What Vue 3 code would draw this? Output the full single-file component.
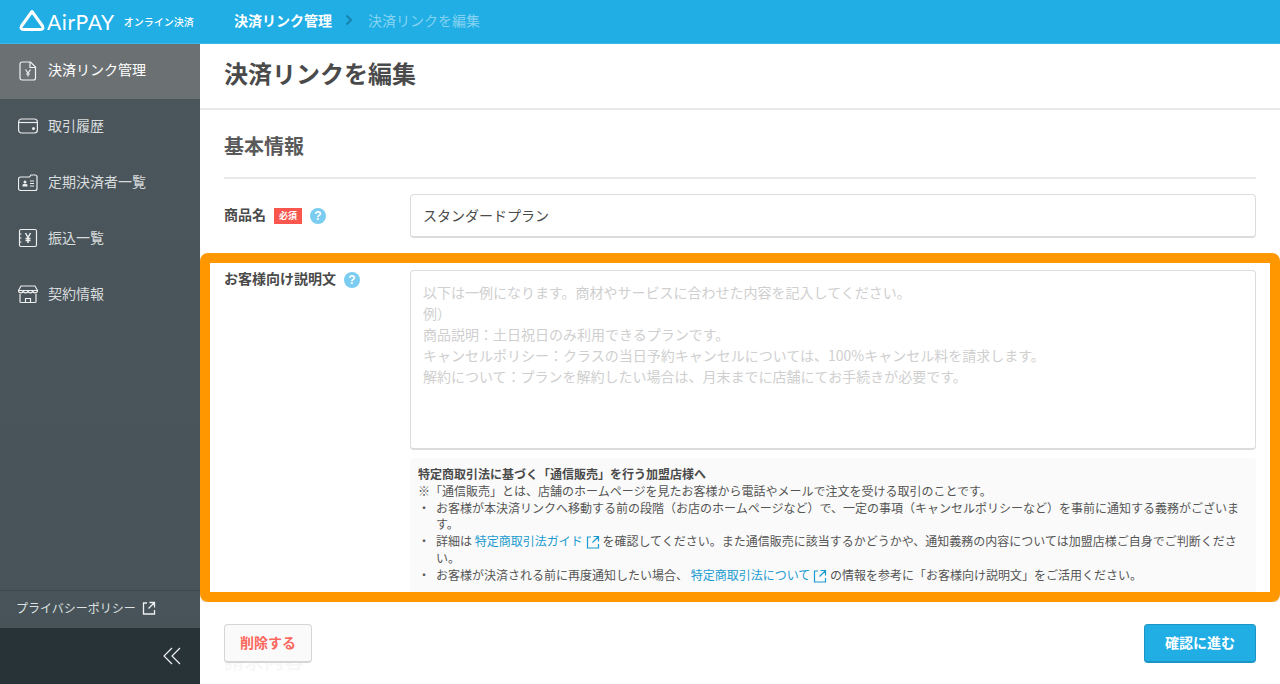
<script setup>
const navItems = [
  { label: '決済リンク管理', icon: 'doc', active: true },
  { label: '取引履歴', icon: 'wallet' },
  { label: '定期決済者一覧', icon: 'card' },
  { label: '振込一覧', icon: 'yen' },
  { label: '契約情報', icon: 'shop' }
]
const placeholder = `以下は一例になります。商材やサービスに合わせた内容を記入してください。
例）
商品説明：土日祝日のみ利用できるプランです。
キャンセルポリシー：クラスの当日予約キャンセルについては、100%キャンセル料を請求します。
解約について：プランを解約したい場合は、月末までに店舗にてお手続きが必要です。`
</script>

<template>
  <div class="page">
    <header class="topbar">
      <div class="brand">
        <svg class="logo-mark" viewBox="0 0 26 23" width="26" height="23" aria-hidden="true">
          <path d="M13 2.500 L23.500 17 Q25 20.500 21.500 20.500 L4.500 20.500 Q1 20.500 2.500 17 Z" fill="none" stroke="#fff" stroke-width="3" stroke-linejoin="round" />
        </svg>
        <span class="logo-text">AirPAY</span>
        <span class="logo-sub">オンライン決済</span>
      </div>
      <nav class="crumbs">
        <span class="crumb-main">決済リンク管理</span>
        <svg viewBox="0 0 8 12" width="8" height="12" aria-hidden="true"><path d="M1.500 1.500 L6 6 L1.500 10.500" fill="none" stroke="#1683ad" stroke-width="2" /></svg>
        <span class="crumb-sub">決済リンクを編集</span>
      </nav>
    </header>

    <div class="body">
      <aside class="sidebar">
        <ul class="nav">
          <li v-for="item in navItems" :key="item.label" class="nav-item" :class="{ active: item.active }">
            <svg class="nav-icon" viewBox="0 0 20 20" width="20" height="20" fill="none" stroke="#fff" stroke-width="1.200" aria-hidden="true">
              <template v-if="item.icon === 'doc'">
                <path d="M4 1h8.500l5 5v11a2 2 0 0 1-2 2H4a2 2 0 0 1-2-2V3a2 2 0 0 1 2-2z" />
                <path d="M12 1v5.500h5.500" />
                <path d="M7.500 8.500l2.500 3.500 2.500-3.500M10 12v3.500M8 13h4" />
              </template>
              <template v-else-if="item.icon === 'wallet'">
                <rect x="0.600" y="3" width="18.800" height="14" rx="3" />
                <path d="M1 6.500h18" />
                <circle cx="15.500" cy="12.500" r="1.500" fill="#fff" stroke="none" />
              </template>
              <template v-else-if="item.icon === 'card'">
                <path d="M2.500 5h9l1.500-2h4a2 2 0 0 1 2 2v11.500a2 2 0 0 1-2 2H2.500a2 2 0 0 1-2-2V7a2 2 0 0 1 2-2z" />
                <circle cx="7" cy="10" r="1.500" fill="#fff" stroke="none" />
                <path d="M4.500 14.500h5V13a1.500 1.500 0 0 0-1.500-1H6a1.500 1.500 0 0 0-1.500 1z" fill="#fff" stroke="none" />
                <path d="M12 9h4M12 11.500h4M12 14h4" />
              </template>
              <template v-else-if="item.icon === 'yen'">
                <rect x="1.500" y="1.500" width="17" height="17" rx="1.500" />
                <path d="M1 6h2.500M1 10h2.500M1 14h2.500" />
                <path d="M7.500 5l2.500 4.500L12.500 5M10 9.500v5.500M7.500 10.500h5M7.500 12.500h5" stroke-width="1.500" />
              </template>
              <template v-else>
                <path d="M3 2h14l2.500 4.500H.5z" />
                <path d="M.5 6.500a2.300 2.300 0 0 0 4.750 0 2.300 2.300 0 0 0 4.750 0 2.300 2.300 0 0 0 4.750 0 2.300 2.300 0 0 0 4.750 0" />
                <path d="M2 10v7.500a1 1 0 0 0 1 1h14a1 1 0 0 0 1-1V10" />
                <path d="M7.500 18.500V14.500h5v4" />
              </template>
            </svg>
            <span class="nav-label">{{ item.label }}</span>
          </li>
        </ul>
        <div class="side-foot">
          <a class="privacy">プライバシーポリシー
            <svg viewBox="0 0 14 14" width="14" height="14" fill="none" stroke="#eef0f1" stroke-width="1.300" aria-hidden="true"><path d="M5 2H1.500v11h11V9M7.500 1.500h5v5M12.500 1.500L6.500 7.500" /></svg>
          </a>
          <div class="collapse">
            <svg viewBox="0 0 18 18" width="18" height="18" fill="none" stroke="#eef0f1" stroke-width="1.200" aria-hidden="true"><path d="M9 1L1 9l8 8M17 1L9 9l8 8" /></svg>
          </div>
        </div>
      </aside>

      <main class="main">
        <div class="title-bar"><h1>決済リンクを編集</h1></div>
        <section class="basic">
          <h2>基本情報</h2>
          <div class="row row-name">
            <div class="label">
              <span>商品名</span>
              <em class="required">必須</em>
              <i class="help">?</i>
            </div>
            <div class="field"><input class="input" value="スタンダードプラン" /></div>
          </div>
        </section>
        <section class="highlight">
          <div class="row row-desc">
            <div class="label">
              <span>お客様向け説明文</span>
              <i class="help">?</i>
            </div>
            <div class="field">
              <textarea class="textarea" :placeholder="placeholder"></textarea>
              <div class="notice">
                <p class="notice-title">特定商取引法に基づく「通信販売」を行う加盟店様へ</p>
                <p>※「通信販売」とは、店舗のホームページを見たお客様から電話やメールで注文を受ける取引のことです。</p>
                <ul>
                  <li>お客様が本決済リンクへ移動する前の段階（お店のホームページなど）で、一定の事項（キャンセルポリシーなど）を事前に通知する義務がございます。</li>
                  <li>詳細は <a>特定商取引法ガイド<svg viewBox="0 0 14 14" width="14" height="14" fill="none" stroke="#1a9ad0" stroke-width="1.200" aria-hidden="true"><path d="M5 2H1.500v11h11V9M7.500 1.500h5v5M12.500 1.500L6.500 7.500" /></svg></a> を確認してください。また通信販売に該当するかどうかや、通知義務の内容については加盟店様ご自身でご判断ください。</li>
                  <li>お客様が決済される前に再度通知したい場合、 <a>特定商取引法について<svg viewBox="0 0 14 14" width="14" height="14" fill="none" stroke="#1a9ad0" stroke-width="1.200" aria-hidden="true"><path d="M5 2H1.500v11h11V9M7.500 1.500h5v5M12.500 1.500L6.500 7.500" /></svg></a> の情報を参考に「お客様向け説明文」をご活用ください。</li>
                </ul>
              </div>
            </div>
          </div>
        </section>
        <div class="ghost">請求内容</div>
        <footer class="actions">
          <button class="btn btn-del" type="button">削除する</button>
          <button class="btn btn-go" type="button">確認に進む</button>
        </footer>
      </main>
    </div>
  </div>
</template>

<style>
html, body { margin: 0; padding: 0; background: #fff; }
</style>

<style scoped>
* { box-sizing: border-box; }
.page {
  width: 1280px;
  height: 684px;
  display: flex;
  flex-direction: column;
  overflow: hidden;
  font-family: "Noto Sans CJK JP", "Noto Sans", sans-serif;
  color: #4a4a4a;
}
.topbar {
  height: 44px;
  flex: none;
  background: #20aee5;
  display: flex;
  align-items: center;
  border-bottom: 1px solid #3bb9ea;
}
.brand {
  width: 234px;
  flex: none;
  padding-left: 19px;
  display: flex;
  align-items: center;
  color: #fff;
}
.logo-mark { margin-top: -2px; }
.logo-text {
  font-family: "Lato", "Noto Sans", sans-serif;
  font-size: 21px;
  letter-spacing: 0.6px;
  line-height: 22px;
  margin-left: 2px;
}
.logo-sub {
  font-size: 10px;
  font-weight: 500;
  margin-left: 9px;
  line-height: 14px;
}
.crumbs {
  display: flex;
  align-items: center;
  font-size: 14px;
  line-height: 20px;
  margin-top: -3px;
}
.crumb-main { color: #fff; font-weight: 700; margin-right: 13px; }
.crumb-sub { color: #86d3f1; margin-left: 15px; }
.body { flex: 1; display: flex; min-height: 0; }
.sidebar {
  width: 200px;
  flex: none;
  display: flex;
  flex-direction: column;
  background: linear-gradient(#4a565c, #475358);
}
.nav { list-style: none; margin: 0; padding: 0; flex: 1; }
.nav-item {
  height: 56px;
  display: flex;
  align-items: center;
  padding-left: 18px;
  gap: 10px;
  font-size: 14px;
  color: #d9dcdd;
  padding-bottom: 2px;
}
.nav-label { margin-bottom: 2px; }
.nav-item.active { background: #6b7173; color: #fff; height: 55px; }
.nav-item.active .nav-label { margin-bottom: 4px; }
.nav-icon { flex: none; opacity: 0.9; }
.side-foot { flex: none; }
.privacy {
  height: 38px;
  display: flex;
  align-items: center;
  gap: 6px;
  padding-left: 16px;
  padding-bottom: 4px;
  font-size: 12px;
  color: #dfe2e3;
  border-top: 1px solid #3d484d;
}
.collapse {
  height: 56px;
  background: #283338;
  display: flex;
  align-items: center;
  justify-content: flex-end;
  padding-right: 19px;
}
.main { flex: 1; position: relative; min-width: 0; overflow: hidden; }
.title-bar {
  height: 66px;
  border-bottom: 2px solid #e8e8e8;
  padding-left: 24px;
  padding-bottom: 6px;
  display: flex;
  align-items: center;
}
h1 {
  margin: 0;
  font-size: 24px;
  line-height: 32px;
  font-weight: 700;
  color: #4a4a4a;
}
.basic { padding: 0 24px; }
h2 {
  margin: 0;
  font-size: 20px;
  line-height: 28px;
  font-weight: 700;
  color: #5a5a5a;
  padding: 22px 0 17px;
  border-bottom: 2px solid #e8e8e8;
  height: 69px;
}
.row { display: flex; }
.row-name { padding-top: 15px; height: 74px; }
.label {
  width: 186px;
  flex: none;
  display: flex;
  align-items: flex-start;
  gap: 8px;
  font-size: 14px;
  font-weight: 700;
  line-height: 20px;
  color: #4a4a4a;
}
.row-name .label { padding-top: 10px; }
.required {
  font-style: normal;
  background: #f9574e;
  color: #fff;
  font-size: 9px;
  line-height: 14px;
  height: 16px;
  padding: 1px 3px;
  width: 28px;
  text-align: center;
  margin-top: 4px;
}
.help {
  width: 16px;
  height: 16px;
  border-radius: 50%;
  background: #7accf0;
  color: #fff;
  font-style: normal;
  font-size: 12px;
  line-height: 16px;
  text-align: center;
  font-weight: 700;
  font-family: "Liberation Sans", sans-serif;
  margin-top: 4px;
}
.field { flex: 1; min-width: 0; }
.input {
  width: 100%;
  height: 44px;
  border: 1px solid #dcdcdc;
  border-bottom-width: 2px;
  border-radius: 4px;
  padding: 0 12px 1px;
  font: inherit;
  font-size: 14px;
  color: #4a4a4a;
  outline: none;
  background: #fff;
  display: block;
}
.highlight {
  height: 349px;
  border: 10px solid #ff9700;
  border-radius: 8px;
  padding: 7px 14px 0;
  overflow: hidden;
  box-shadow: 0 2px 0 rgba(0, 0, 0, 0.1);
}
.row-desc .label { gap: 8px; margin-top: -2px; }
.textarea {
  width: 100%;
  height: 180px;
  display: block;
  border: 1px solid #dcdcdc;
  border-bottom-width: 2px;
  border-radius: 4px;
  padding: 11px 12px;
  font: inherit;
  font-size: 14px;
  line-height: 21px;
  resize: none;
  outline: none;
  background: #fff;
}
.textarea::placeholder { color: #cfcfcf; opacity: 1; }
.notice {
  margin-top: 8px;
  background: #fafafa;
  padding: 8px 8px 0;
  height: 134px;
  font-size: 12px;
  line-height: 16.800px;
  color: #555;
  border-radius: 4px 4px 0 0;
}
.notice p { margin: 0; }
.notice-title { font-weight: 700; color: #4a4a4a; }
.notice ul { list-style: none; margin: 0; padding: 0; }
.notice li { position: relative; padding-left: 18px; }
.notice li::before { content: "・"; position: absolute; left: 0; }
.notice a { color: #1a9ad0; }
.notice a svg { vertical-align: -3px; margin-left: 3px; }
.ghost {
  font-size: 20px;
  font-weight: 700;
  color: #b0b0b0;
  padding: 45px 0 0 24px;
  line-height: 28px;
}
.actions {
  position: absolute;
  left: 0;
  right: 0;
  bottom: 0;
  height: 82px;
  padding: 22px 24px 0;
  display: flex;
  justify-content: space-between;
  align-items: flex-start;
  background: rgba(255, 255, 255, 0.9);
}
.btn {
  height: 39px;
  border-radius: 4px;
  font: inherit;
  font-size: 14px;
  font-weight: 700;
  padding: 0 0 2px;
  cursor: pointer;
}
.btn-del {
  width: 88px;
  background: #fafafa;
  color: #fb675d;
  border: 1px solid #d5d5d5;
  border-bottom-width: 2px;
}
.btn-go {
  width: 112px;
  background: #20aee5;
  color: #fff;
  border: 1px solid #1a95c6;
  border-bottom-width: 2px;
}
</style>
